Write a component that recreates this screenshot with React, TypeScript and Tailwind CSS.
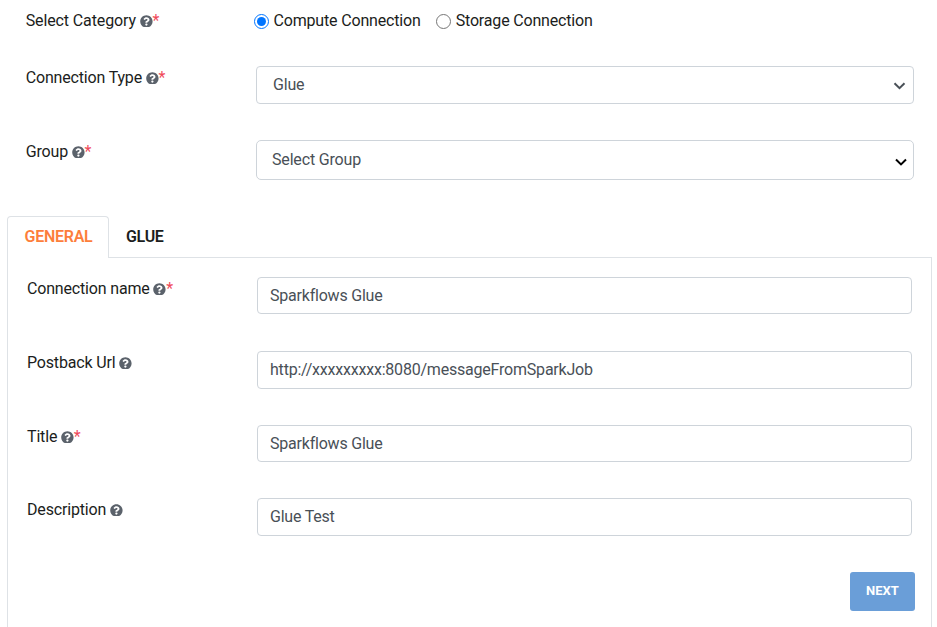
import { FaQuestionCircle } from "react-icons/fa";

function Label({ text, required = false, className = "" }: { text: string; required?: boolean; className?: string }) {
  return (
    <label className={`flex h-6 shrink-0 items-center leading-6 text-[#1b1d20] ${className}`}>
      {text}
      <FaQuestionCircle className="ml-[3.8px] h-[12.8px] w-[12.8px] text-[#5b626b]" />
      {required && <span className="text-[#f04a5a]">*</span>}
    </label>
  );
}

function Chevron({ className }: { className: string }) {
  return (
    <svg viewBox="0 0 12 8" fill="none" stroke="currentColor" strokeWidth="2" className={className}>
      <path d="M1 1.2 6 6.2 11 1.2" />
    </svg>
  );
}

function Field({
  label,
  value,
  required,
  row,
  box,
}: {
  label: string;
  value: string;
  required?: boolean;
  row: string;
  box: string;
}) {
  return (
    <div className={`flex items-start ${row}`}>
      <Label text={label} required={required} className="w-[230px]" />
      <input
        type="text"
        defaultValue={value}
        className={`w-[655px] rounded-[4px] border border-[#ced4da] bg-white px-3 tracking-[-0.21px] text-[#495057] outline-none ${box}`}
      />
    </div>
  );
}

export default function App() {
  return (
    <div className="h-[627px] w-[937px] overflow-hidden bg-white font-['Roboto',sans-serif] text-[16px] tracking-[-0.17px]">
      <div className="flex h-[66px] items-start pt-[9px] pl-[25.7px]">
        <Label text="Select Category" required className="w-[228.3px] tracking-[-0.12px]" />
        <label className="flex h-6 items-center text-[#1b1d20]">
          <input type="radio" name="category" defaultChecked className="mr-[4.5px] h-[15px] w-[15px]" />
          Compute Connection
        </label>
        <label className="ml-[15px] flex h-6 items-center text-[#1b1d20]">
          <input type="radio" name="category" className="mr-[5px] h-[15px] w-[15px]" />
          Storage Connection
        </label>
      </div>

      <div className="flex h-[74px] items-start pl-[26px]">
        <Label text="Connection Type" required className="-ml-[0.3px] w-[230.3px]" />
        <div className="flex h-[38px] w-[658px] items-center justify-between rounded-[4px] border border-[#ced4da] pr-[7px] pb-px pl-4 text-[#495057]">
          <span>Glue</span>
          <Chevron className="mt-[2px] h-2 w-[13px]" />
        </div>
      </div>

      <div className="flex h-[76px] items-start pl-[26px]">
        <Label text="Group" required className="-ml-[0.3px] w-[230.3px]" />
        <div className="flex h-10 w-[658px] items-center justify-between rounded-[5px] border border-[#ced4da] pr-[6px] pb-px pl-[15px] text-[#495057]">
          <span>Select Group</span>
          <Chevron className="mt-[5px] h-[8.5px] w-3 text-black" />
        </div>
      </div>

      <div className="ml-[7px] w-[925px]">
        <div className="flex h-[42px] border-b border-[#dee2e6] font-semibold leading-6">
          <div className="-mb-px w-[102px] rounded-t-[4px] border border-b-0 border-[#dee2e6] bg-white pt-2 pl-[16.5px] tracking-[-0.25px] text-[#fd7e3b]">
            GENERAL
          </div>
          <div className="pt-[9px] pl-[17px] tracking-[-0.3px] text-[#1b1d20]">GLUE</div>
        </div>
        <div className="h-[369px] border-x border-[#dee2e6] pt-[19px] pl-[19px]">
          <Field label="Connection name" value="Sparkflows Glue" required row="h-[74px]" box="h-[37px]" />
          <Field label="Postback Url" value="http://xxxxxxxxx:8080/messageFromSparkJob" row="h-[74px]" box="h-[38px] pb-[2px]" />
          <Field label="Title" value="Sparkflows Glue" required row="h-[73px]" box="h-[37px]" />
          <Field label="Description" value="Glue Test" row="h-[74px]" box="h-[38px] pb-[2px]" />
          <div className="flex justify-end pr-4">
            <button className="h-[39px] w-[65px] rounded-[3px] bg-[#6a9ed8] pb-[2px] text-[13px] font-bold tracking-normal text-white">
              NEXT
            </button>
          </div>
        </div>
      </div>
    </div>
  );
}
